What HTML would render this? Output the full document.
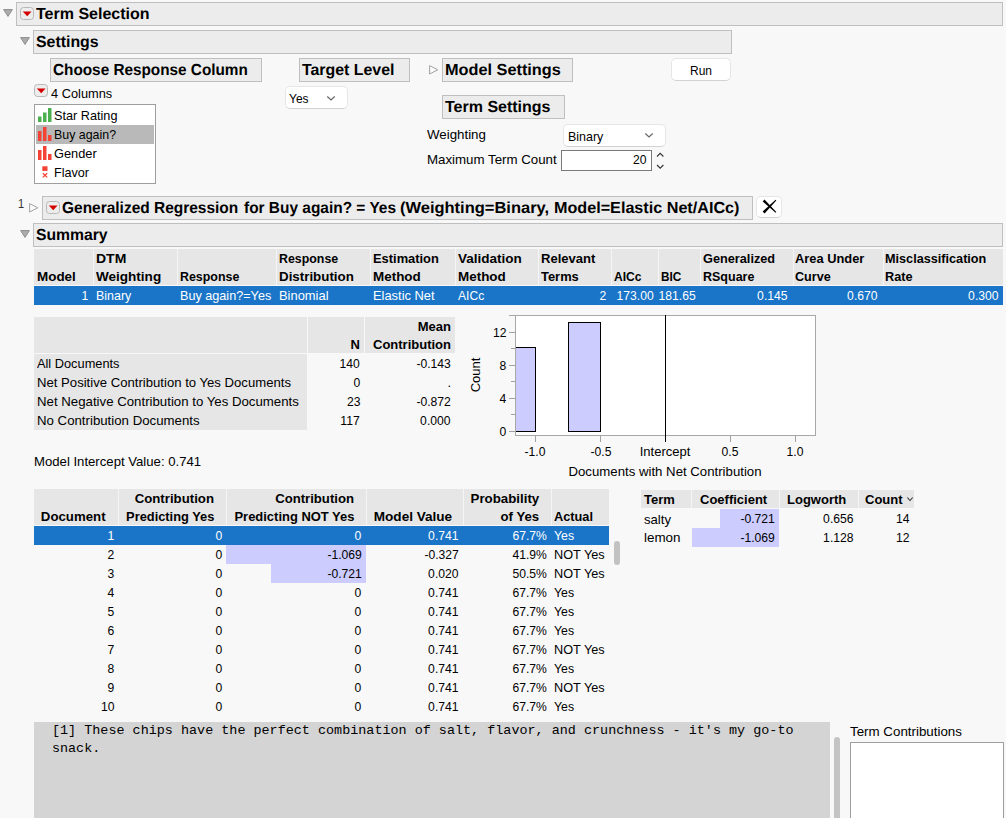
<!DOCTYPE html>
<html lang="en">
<head>
<meta charset="utf-8">
<title>Term Selection</title>
<style>
html,body{margin:0;padding:0}
body{width:1006px;height:818px;overflow:hidden;background:#f8f8f8;position:relative;
 font-family:"Liberation Sans",sans-serif;font-size:13px;color:#000;}
.b{position:absolute;box-sizing:border-box}
.t{position:absolute;white-space:nowrap;line-height:20px;height:20px}
.h{font-weight:bold;font-size:16px}
.th{font-weight:bold;font-size:13px}
.w{color:#fff}
.hd{background:#ececec;border:1px solid #bfbfbf}
.mono{font-family:"Liberation Mono",monospace;font-size:13.4px}
svg{position:absolute;overflow:visible}
</style>
</head>
<body>
<svg style="left:3px;top:9px" width="10" height="8" viewBox="0 0 10 8"><path d="M0.6 0.6 L9.4 0.6 L5 7.4 Z" fill="#acacac" stroke="#8e8e8e" stroke-width="1" stroke-linejoin="round"/></svg>
<div class="b hd" style="left:16px;top:2px;width:987px;height:24px;"></div>
<svg style="left:20px;top:7px" width="14" height="13" viewBox="0 0 14 13"><rect x="0.5" y="0.5" width="13" height="12" rx="3" ry="3" fill="#ededed" stroke="#b8b8b8"/><path d="M2.8 4.6 L11.6 4.6 L7.2 9.2 Z" fill="#d40000"/></svg>
<div class="t h" style="top:4px;left:36px;transform:rotate(0.03deg);transform-origin:0 50%;">Term Selection</div>
<svg style="left:20px;top:37px" width="10" height="8" viewBox="0 0 10 8"><path d="M0.6 0.6 L9.4 0.6 L5 7.4 Z" fill="#acacac" stroke="#8e8e8e" stroke-width="1" stroke-linejoin="round"/></svg>
<div class="b hd" style="left:33px;top:30px;width:699px;height:24px;"></div>
<div class="t h" style="top:32px;left:36px;transform:scaleX(0.992) rotate(0.03deg);transform-origin:0 50%;">Settings</div>
<div class="b hd" style="left:50px;top:58px;width:212px;height:24px;"></div>
<div class="t h" style="top:60px;left:53px;transform:scaleX(0.957) rotate(0.03deg);transform-origin:0 50%;">Choose Response Column</div>
<div class="b hd" style="left:299px;top:58px;width:111px;height:24px;"></div>
<div class="t h" style="top:60px;left:302px;transform:scaleX(0.993) rotate(0.03deg);transform-origin:0 50%;">Target Level</div>
<svg style="left:429px;top:64.5px" width="10" height="10" viewBox="0 0 10 10"><path d="M0.6 0.6 L8.8 4.8 L0.6 9 Z" fill="#fbfbfb" stroke="#a2a2a2" stroke-width="1" stroke-linejoin="round"/></svg>
<div class="b hd" style="left:442px;top:58px;width:131px;height:24px;"></div>
<div class="t h" style="top:60px;left:445px;transform:scaleX(1.018) rotate(0.03deg);transform-origin:0 50%;">Model Settings</div>
<div class="b " style="left:671px;top:58px;width:60px;height:23px;background:#fff;border:1px solid #e6e6e6;border-bottom-color:#d2d2d2;border-radius:5px"></div>
<div class="t" style="top:61px;left:701px;transform:translateX(-50%) scaleX(0.923);">Run</div>
<div class="b hd" style="left:442px;top:95px;width:123px;height:24px;"></div>
<div class="t h" style="top:97px;left:445px;transform:rotate(0.03deg);transform-origin:0 50%;">Term Settings</div>
<svg style="left:34px;top:84px" width="14" height="13" viewBox="0 0 14 13"><rect x="0.5" y="0.5" width="13" height="12" rx="3" ry="3" fill="#ededed" stroke="#b8b8b8"/><path d="M2.8 4.6 L11.6 4.6 L7.2 9.2 Z" fill="#d40000"/></svg>
<div class="t" style="top:84px;left:50.7px;transform:scaleX(0.985);transform-origin:0 50%;">4 Columns</div>
<div class="b " style="left:34px;top:104px;width:122px;height:80px;background:#fff;border:1px solid #9e9e9e"></div>
<div class="b " style="left:36px;top:125px;width:118px;height:19px;background:#b9b9b9"></div>
<svg style="left:38px;top:108px" width="14" height="14" viewBox="0 0 14 14"><rect x="0" y="8.5" width="3.5" height="5.5" fill="#4caf50"/><rect x="5" y="4.5" width="3.5" height="9.5" fill="#4caf50"/><rect x="10" y="0" width="3.5" height="14" fill="#4caf50"/></svg>
<svg style="left:38px;top:127px" width="14" height="14" viewBox="0 0 14 14"><rect x="0" y="4" width="3.5" height="10" fill="#f44336"/><rect x="5" y="0" width="3.5" height="14" fill="#f44336"/><rect x="10" y="8" width="3.5" height="6" fill="#f44336"/></svg>
<svg style="left:38px;top:146px" width="14" height="14" viewBox="0 0 14 14"><rect x="0" y="4" width="3.5" height="10" fill="#f44336"/><rect x="5" y="0" width="3.5" height="14" fill="#f44336"/><rect x="10" y="8" width="3.5" height="6" fill="#f44336"/></svg>
<svg style="left:42px;top:166px" width="6" height="12" viewBox="0 0 6 12"><rect x="0.3" y="0.3" width="5.2" height="4.6" fill="#f44336"/><path d="M0.8 7.2 L5.2 11.4 M5.2 7.2 L0.8 11.4" stroke="#f44336" stroke-width="1.3" fill="none"/></svg>
<div class="t" style="top:106px;left:54px;transform:scaleX(0.976);transform-origin:0 50%;">Star Rating</div>
<div class="t" style="top:125px;left:54px;transform:scaleX(0.954);transform-origin:0 50%;">Buy again?</div>
<div class="t" style="top:144px;left:54px;transform:scaleX(0.984);transform-origin:0 50%;">Gender</div>
<div class="t" style="top:163px;left:54px;transform:scaleX(0.971);transform-origin:0 50%;">Flavor</div>
<div class="b " style="left:285px;top:86px;width:63px;height:23px;background:#fff;border:1px solid #e6e6e6;border-bottom-color:#d2d2d2;border-radius:5px"></div>
<div class="t" style="top:89px;left:289px;transform:scaleX(0.920);transform-origin:0 50%;">Yes</div>
<svg style="left:327px;top:95.5px" width="8" height="5" viewBox="0 0 8 5"><path d="M0.3 0.5 L4.0 4 L7.7 0.5" stroke="#666" stroke-width="1.2" fill="none"/></svg>
<div class="t" style="top:125px;left:427px;transform:scaleX(1.023);transform-origin:0 50%;">Weighting</div>
<div class="b " style="left:563px;top:124px;width:103px;height:23px;background:#fff;border:1px solid #e6e6e6;border-bottom-color:#d2d2d2;border-radius:5px"></div>
<div class="t" style="top:127px;left:568px;transform:scaleX(0.957);transform-origin:0 50%;">Binary</div>
<svg style="left:645px;top:133px" width="8" height="5" viewBox="0 0 8 5"><path d="M0.3 0.5 L4.0 4 L7.7 0.5" stroke="#666" stroke-width="1.2" fill="none"/></svg>
<div class="t" style="top:150px;left:427px;transform:scaleX(1.022);transform-origin:0 50%;">Maximum Term Count</div>
<div class="b " style="left:561px;top:150px;width:91px;height:21px;background:#fff;border:1px solid #7a7a7a"></div>
<div class="t" style="top:150px;right:360px;transform:scaleX(0.935);transform-origin:100% 50%;">20</div>
<svg style="left:656px;top:152px" width="8" height="18" viewBox="0 0 8 18"><path d="M1 4.5 L4.2 1.3 L7.4 4.5 M1 13 L4.2 16.2 L7.4 13" stroke="#333" stroke-width="1.1" fill="none"/></svg>
<div class="t" style="top:194px;left:17.5px;transform:scaleX(0.850);transform-origin:0 50%;color:#333">1</div>
<svg style="left:29px;top:202.5px" width="10" height="10" viewBox="0 0 10 10"><path d="M0.6 0.6 L8.8 4.8 L0.6 9 Z" fill="#fbfbfb" stroke="#a2a2a2" stroke-width="1" stroke-linejoin="round"/></svg>
<div class="b hd" style="left:42px;top:196px;width:711px;height:24px;"></div>
<svg style="left:46px;top:201px" width="14" height="13" viewBox="0 0 14 13"><rect x="0.5" y="0.5" width="13" height="12" rx="3" ry="3" fill="#ededed" stroke="#b8b8b8"/><path d="M2.8 4.6 L11.6 4.6 L7.2 9.2 Z" fill="#d40000"/></svg>
<div class="t h" style="top:198px;left:62px;transform:scaleX(0.967) rotate(0.03deg);transform-origin:0 50%;">Generalized Regression</div>
<div class="t h" style="top:198px;left:243.5px;transform:scaleX(0.965) rotate(0.03deg);transform-origin:0 50%;">for Buy again? = Yes</div>
<div class="t h" style="top:198px;left:400px;transform:scaleX(1.030) rotate(0.03deg);transform-origin:0 50%;">(Weighting=Binary,</div>
<div class="t h" style="top:198px;left:553.5px;transform:scaleX(1.010) rotate(0.03deg);transform-origin:0 50%;">Model=Elastic Net/AICc)</div>
<div class="b " style="left:756px;top:196px;width:26px;height:22px;background:#fff;border:1px solid #e6e6e6;border-bottom-color:#d2d2d2;border-radius:5px"></div>
<svg style="left:762px;top:199px" width="15" height="15" viewBox="0 0 15 15"><path d="M2.5 0.6 L14.3 13.1 L13.6 13.8 L0.7 2.4 Z M13.6 0.7 L14.3 1.4 L2.6 14.4 L0.6 12.6 Z" fill="#000"/></svg>
<svg style="left:20px;top:230px" width="10" height="8" viewBox="0 0 10 8"><path d="M0.6 0.6 L9.4 0.6 L5 7.4 Z" fill="#acacac" stroke="#8e8e8e" stroke-width="1" stroke-linejoin="round"/></svg>
<div class="b hd" style="left:33px;top:223px;width:970px;height:24px;"></div>
<div class="t h" style="top:225px;left:36px;transform:scaleX(0.982) rotate(0.03deg);transform-origin:0 50%;">Summary</div>
<div class="b " style="left:34px;top:249px;width:969px;height:36px;background:#e6e6e6"></div>
<div class="b " style="left:93px;top:249px;width:1.2px;height:36px;background:#f5f5f5"></div>
<div class="b " style="left:177px;top:249px;width:1.2px;height:36px;background:#f5f5f5"></div>
<div class="b " style="left:275.5px;top:249px;width:1.2px;height:36px;background:#f5f5f5"></div>
<div class="b " style="left:370px;top:249px;width:1.2px;height:36px;background:#f5f5f5"></div>
<div class="b " style="left:455px;top:249px;width:1.2px;height:36px;background:#f5f5f5"></div>
<div class="b " style="left:538px;top:249px;width:1.2px;height:36px;background:#f5f5f5"></div>
<div class="b " style="left:611px;top:249px;width:1.2px;height:36px;background:#f5f5f5"></div>
<div class="b " style="left:658px;top:249px;width:1.2px;height:36px;background:#f5f5f5"></div>
<div class="b " style="left:700px;top:249px;width:1.2px;height:36px;background:#f5f5f5"></div>
<div class="b " style="left:792.5px;top:249px;width:1.2px;height:36px;background:#f5f5f5"></div>
<div class="b " style="left:882.5px;top:249px;width:1.2px;height:36px;background:#f5f5f5"></div>
<div class="t th" style="top:267px;left:37px;transform:scaleX(1.034);transform-origin:0 50%;">Model</div>
<div class="t th" style="top:249px;left:96px;transform:scaleX(1.078);transform-origin:0 50%;">DTM</div>
<div class="t th" style="top:267px;left:96px;transform:scaleX(1.041);transform-origin:0 50%;">Weighting</div>
<div class="t th" style="top:267px;left:180px;transform:scaleX(0.955);transform-origin:0 50%;">Response</div>
<div class="t th" style="top:249px;left:279px;transform:scaleX(0.952);transform-origin:0 50%;">Response</div>
<div class="t th" style="top:267px;left:279px;transform:scaleX(1.026);transform-origin:0 50%;">Distribution</div>
<div class="t th" style="top:249px;left:373px;transform:scaleX(0.991);transform-origin:0 50%;">Estimation</div>
<div class="t th" style="top:267px;left:373px;transform:scaleX(1.033);transform-origin:0 50%;">Method</div>
<div class="t th" style="top:249px;left:458px;transform:scaleX(1.040);transform-origin:0 50%;">Validation</div>
<div class="t th" style="top:267px;left:458px;transform:scaleX(1.033);transform-origin:0 50%;">Method</div>
<div class="t th" style="top:249px;left:541px;transform:scaleX(1.004);transform-origin:0 50%;">Relevant</div>
<div class="t th" style="top:267px;left:541px;transform:scaleX(0.993);transform-origin:0 50%;">Terms</div>
<div class="t th" style="top:267px;left:614px;transform:scaleX(0.929);transform-origin:0 50%;">AICc</div>
<div class="t th" style="top:267px;left:661px;transform:scaleX(0.907);transform-origin:0 50%;">BIC</div>
<div class="t th" style="top:249px;left:703px;transform:scaleX(0.979);transform-origin:0 50%;">Generalized</div>
<div class="t th" style="top:267px;left:703px;transform:scaleX(0.962);transform-origin:0 50%;">RSquare</div>
<div class="t th" style="top:249px;left:794.5px;transform:scaleX(0.989);transform-origin:0 50%;">Area Under</div>
<div class="t th" style="top:267px;left:794.5px;transform:scaleX(0.970);transform-origin:0 50%;">Curve</div>
<div class="t th" style="top:249px;left:885px;transform:scaleX(0.974);transform-origin:0 50%;">Misclassification</div>
<div class="t th" style="top:267px;left:885px;transform:scaleX(0.978);transform-origin:0 50%;">Rate</div>
<div class="b " style="left:34px;top:286px;width:969px;height:19px;background:#1a75c8"></div>
<div class="t w" style="top:286px;right:918px;transform:scaleX(0.935);transform-origin:100% 50%;">1</div>
<div class="t w" style="top:286px;left:96px;transform:scaleX(0.957);transform-origin:0 50%;">Binary</div>
<div class="t w" style="top:286px;left:180px;transform:scaleX(0.972);transform-origin:0 50%;">Buy again?=Yes</div>
<div class="t w" style="top:286px;left:279px;transform:scaleX(0.993);transform-origin:0 50%;">Binomial</div>
<div class="t w" style="top:286px;left:373px;transform:scaleX(0.991);transform-origin:0 50%;">Elastic Net</div>
<div class="t w" style="top:286px;left:458px;transform:scaleX(0.931);transform-origin:0 50%;">AICc</div>
<div class="t w" style="top:286px;right:399.5px;transform:scaleX(0.935);transform-origin:100% 50%;">2</div>
<div class="t w" style="top:286px;right:352.5px;transform:scaleX(0.935);transform-origin:100% 50%;">173.00</div>
<div class="t w" style="top:286px;right:310.5px;transform:scaleX(0.935);transform-origin:100% 50%;">181.65</div>
<div class="t w" style="top:286px;right:218px;transform:scaleX(0.935);transform-origin:100% 50%;">0.145</div>
<div class="t w" style="top:286px;right:128px;transform:scaleX(0.935);transform-origin:100% 50%;">0.670</div>
<div class="t w" style="top:286px;right:7px;transform:scaleX(0.935);transform-origin:100% 50%;">0.300</div>
<div class="b " style="left:34px;top:317px;width:273px;height:36px;background:#e6e6e6"></div>
<div class="b " style="left:308px;top:317px;width:56px;height:36px;background:#e6e6e6"></div>
<div class="b " style="left:365px;top:317px;width:90px;height:36px;background:#e6e6e6"></div>
<div class="b " style="left:34px;top:354px;width:273px;height:76px;background:#e6e6e6"></div>
<div class="t th" style="top:335px;right:646px;">N</div>
<div class="t th" style="top:317px;right:555px;">Mean</div>
<div class="t th" style="top:335px;right:555px;">Contribution</div>
<div class="t" style="top:354px;left:37px;transform:scaleX(0.984);transform-origin:0 50%;">All Documents</div>
<div class="t" style="top:354px;right:646px;transform:scaleX(0.935);transform-origin:100% 50%;">140</div>
<div class="t" style="top:354px;right:555px;transform:scaleX(0.935);transform-origin:100% 50%;">-0.143</div>
<div class="t" style="top:373px;left:37px;transform:scaleX(1.010);transform-origin:0 50%;">Net Positive Contribution to Yes Documents</div>
<div class="t" style="top:373px;right:646px;transform:scaleX(0.935);transform-origin:100% 50%;">0</div>
<div class="t" style="top:373px;right:555px;">.</div>
<div class="t" style="top:392px;left:37px;transform:scaleX(1.018);transform-origin:0 50%;">Net Negative Contribution to Yes Documents</div>
<div class="t" style="top:392px;right:646px;transform:scaleX(0.935);transform-origin:100% 50%;">23</div>
<div class="t" style="top:392px;right:555px;transform:scaleX(0.935);transform-origin:100% 50%;">-0.872</div>
<div class="t" style="top:411px;left:37px;transform:scaleX(1.018);transform-origin:0 50%;">No Contribution Documents</div>
<div class="t" style="top:411px;right:646px;transform:scaleX(0.935);transform-origin:100% 50%;">117</div>
<div class="t" style="top:411px;right:555px;transform:scaleX(0.935);transform-origin:100% 50%;">0.000</div>
<div class="t" style="top:452px;left:34px;transform:scaleX(1.011);transform-origin:0 50%;">Model Intercept Value: 0.741</div>
<div class="b " style="left:515px;top:315px;width:301px;height:121px;background:#fff;border:1px solid #a8a8a8"></div>
<div class="b " style="left:509px;top:315px;width:6px;height:1px;background:#a8a8a8"></div>
<div class="b " style="left:516px;top:347px;width:20px;height:85px;background:#ccccff;border:1px solid #000;border-left:none"></div>
<div class="b " style="left:568px;top:322px;width:33px;height:110px;background:#ccccff;border:1px solid #000"></div>
<div class="b " style="left:509px;top:332px;width:6px;height:1px;background:#a0a0a0"></div>
<div class="b " style="left:509px;top:365px;width:6px;height:1px;background:#a0a0a0"></div>
<div class="b " style="left:509px;top:398px;width:6px;height:1px;background:#a0a0a0"></div>
<div class="b " style="left:509px;top:431px;width:6px;height:1px;background:#a0a0a0"></div>
<div class="b " style="left:511px;top:348px;width:4px;height:1px;background:#a0a0a0"></div>
<div class="b " style="left:511px;top:381px;width:4px;height:1px;background:#a0a0a0"></div>
<div class="b " style="left:511px;top:414px;width:4px;height:1px;background:#a0a0a0"></div>
<div class="t" style="top:323px;right:500px;transform:scaleX(0.935);transform-origin:100% 50%;">12</div>
<div class="t" style="top:356px;right:500px;transform:scaleX(0.935);transform-origin:100% 50%;">8</div>
<div class="t" style="top:389px;right:500px;transform:scaleX(0.935);transform-origin:100% 50%;">4</div>
<div class="t" style="top:422px;right:500px;transform:scaleX(0.935);transform-origin:100% 50%;">0</div>
<div class="b " style="left:535px;top:436px;width:1px;height:6px;background:#a0a0a0"></div>
<div class="b " style="left:600px;top:436px;width:1px;height:6px;background:#a0a0a0"></div>
<div class="b " style="left:730px;top:436px;width:1px;height:6px;background:#a0a0a0"></div>
<div class="b " style="left:795px;top:436px;width:1px;height:6px;background:#a0a0a0"></div>
<div class="b " style="left:665px;top:315px;width:1px;height:127px;background:#000"></div>
<div class="t" style="top:442px;left:535px;transform:translateX(-50%) scaleX(0.935);">-1.0</div>
<div class="t" style="top:442px;left:601px;transform:translateX(-50%) scaleX(0.935);">-0.5</div>
<div class="t" style="top:442px;left:665px;transform:translateX(-50%);">Intercept</div>
<div class="t" style="top:442px;left:730px;transform:translateX(-50%) scaleX(0.935);">0.5</div>
<div class="t" style="top:442px;left:795px;transform:translateX(-50%) scaleX(0.935);">1.0</div>
<div class="t" style="top:462px;left:665px;transform:translateX(-50%) scaleX(1.016);">Documents with Net Contribution</div>
<div class="t" style="left:476px;top:365px;transform:translateX(-50%) rotate(-90deg)">Count</div>
<div class="b " style="left:34px;top:489px;width:575px;height:36px;background:#e6e6e6"></div>
<div class="b " style="left:118px;top:489px;width:1.2px;height:36px;background:#f5f5f5"></div>
<div class="b " style="left:226px;top:489px;width:1.2px;height:36px;background:#f5f5f5"></div>
<div class="b " style="left:366px;top:489px;width:1.2px;height:36px;background:#f5f5f5"></div>
<div class="b " style="left:463px;top:489px;width:1.2px;height:36px;background:#f5f5f5"></div>
<div class="b " style="left:551px;top:489px;width:1.2px;height:36px;background:#f5f5f5"></div>
<div class="t th" style="top:507px;right:900px;transform:scaleX(1.018);transform-origin:100% 50%;">Document</div>
<div class="t th" style="top:489px;right:792px;transform:scaleX(1.017);transform-origin:100% 50%;">Contribution</div>
<div class="t th" style="top:507px;right:792px;transform:scaleX(0.988);transform-origin:100% 50%;">Predicting Yes</div>
<div class="t th" style="top:489px;right:652px;transform:scaleX(1.011);transform-origin:100% 50%;">Contribution</div>
<div class="t th" style="top:507px;right:651.5px;transform:scaleX(0.996);transform-origin:100% 50%;">Predicting NOT Yes</div>
<div class="t th" style="top:507px;right:554px;transform:scaleX(1.043);transform-origin:100% 50%;">Model Value</div>
<div class="t th" style="top:489px;right:467px;transform:scaleX(1.021);transform-origin:100% 50%;">Probability</div>
<div class="t th" style="top:507px;right:467px;transform:scaleX(1.012);transform-origin:100% 50%;">of Yes</div>
<div class="t th" style="top:507px;left:554px;transform:scaleX(0.981);transform-origin:0 50%;">Actual</div>
<div class="b " style="left:34px;top:526px;width:575px;height:19px;background:#1a75c8"></div>
<div class="b " style="left:226px;top:545px;width:140px;height:19px;background:#ccccff"></div>
<div class="b " style="left:271px;top:564px;width:95px;height:19px;background:#ccccff"></div>
<div class="t w" style="top:526px;right:892px;transform:scaleX(0.935);transform-origin:100% 50%;">1</div>
<div class="t w" style="top:526px;right:784px;transform:scaleX(0.935);transform-origin:100% 50%;">0</div>
<div class="t w" style="top:526px;right:644.5px;transform:scaleX(0.935);transform-origin:100% 50%;">0</div>
<div class="t w" style="top:526px;right:547px;transform:scaleX(0.935);transform-origin:100% 50%;">0.741</div>
<div class="t w" style="top:526px;right:459.5px;transform:scaleX(0.935);transform-origin:100% 50%;">67.7%</div>
<div class="t w" style="top:526px;left:554px;transform:scaleX(0.945);transform-origin:0 50%;">Yes</div>
<div class="t" style="top:545px;right:892px;transform:scaleX(0.935);transform-origin:100% 50%;">2</div>
<div class="t" style="top:545px;right:784px;transform:scaleX(0.935);transform-origin:100% 50%;">0</div>
<div class="t" style="top:545px;right:644.5px;transform:scaleX(0.935);transform-origin:100% 50%;">-1.069</div>
<div class="t" style="top:545px;right:547px;transform:scaleX(0.935);transform-origin:100% 50%;">-0.327</div>
<div class="t" style="top:545px;right:459.5px;transform:scaleX(0.935);transform-origin:100% 50%;">41.9%</div>
<div class="t" style="top:545px;left:554px;transform:scaleX(0.978);transform-origin:0 50%;">NOT Yes</div>
<div class="t" style="top:564px;right:892px;transform:scaleX(0.935);transform-origin:100% 50%;">3</div>
<div class="t" style="top:564px;right:784px;transform:scaleX(0.935);transform-origin:100% 50%;">0</div>
<div class="t" style="top:564px;right:644.5px;transform:scaleX(0.935);transform-origin:100% 50%;">-0.721</div>
<div class="t" style="top:564px;right:547px;transform:scaleX(0.935);transform-origin:100% 50%;">0.020</div>
<div class="t" style="top:564px;right:459.5px;transform:scaleX(0.935);transform-origin:100% 50%;">50.5%</div>
<div class="t" style="top:564px;left:554px;transform:scaleX(0.978);transform-origin:0 50%;">NOT Yes</div>
<div class="t" style="top:583px;right:892px;transform:scaleX(0.935);transform-origin:100% 50%;">4</div>
<div class="t" style="top:583px;right:784px;transform:scaleX(0.935);transform-origin:100% 50%;">0</div>
<div class="t" style="top:583px;right:644.5px;transform:scaleX(0.935);transform-origin:100% 50%;">0</div>
<div class="t" style="top:583px;right:547px;transform:scaleX(0.935);transform-origin:100% 50%;">0.741</div>
<div class="t" style="top:583px;right:459.5px;transform:scaleX(0.935);transform-origin:100% 50%;">67.7%</div>
<div class="t" style="top:583px;left:554px;transform:scaleX(0.945);transform-origin:0 50%;">Yes</div>
<div class="t" style="top:602px;right:892px;transform:scaleX(0.935);transform-origin:100% 50%;">5</div>
<div class="t" style="top:602px;right:784px;transform:scaleX(0.935);transform-origin:100% 50%;">0</div>
<div class="t" style="top:602px;right:644.5px;transform:scaleX(0.935);transform-origin:100% 50%;">0</div>
<div class="t" style="top:602px;right:547px;transform:scaleX(0.935);transform-origin:100% 50%;">0.741</div>
<div class="t" style="top:602px;right:459.5px;transform:scaleX(0.935);transform-origin:100% 50%;">67.7%</div>
<div class="t" style="top:602px;left:554px;transform:scaleX(0.945);transform-origin:0 50%;">Yes</div>
<div class="t" style="top:621px;right:892px;transform:scaleX(0.935);transform-origin:100% 50%;">6</div>
<div class="t" style="top:621px;right:784px;transform:scaleX(0.935);transform-origin:100% 50%;">0</div>
<div class="t" style="top:621px;right:644.5px;transform:scaleX(0.935);transform-origin:100% 50%;">0</div>
<div class="t" style="top:621px;right:547px;transform:scaleX(0.935);transform-origin:100% 50%;">0.741</div>
<div class="t" style="top:621px;right:459.5px;transform:scaleX(0.935);transform-origin:100% 50%;">67.7%</div>
<div class="t" style="top:621px;left:554px;transform:scaleX(0.945);transform-origin:0 50%;">Yes</div>
<div class="t" style="top:640px;right:892px;transform:scaleX(0.935);transform-origin:100% 50%;">7</div>
<div class="t" style="top:640px;right:784px;transform:scaleX(0.935);transform-origin:100% 50%;">0</div>
<div class="t" style="top:640px;right:644.5px;transform:scaleX(0.935);transform-origin:100% 50%;">0</div>
<div class="t" style="top:640px;right:547px;transform:scaleX(0.935);transform-origin:100% 50%;">0.741</div>
<div class="t" style="top:640px;right:459.5px;transform:scaleX(0.935);transform-origin:100% 50%;">67.7%</div>
<div class="t" style="top:640px;left:554px;transform:scaleX(0.978);transform-origin:0 50%;">NOT Yes</div>
<div class="t" style="top:659px;right:892px;transform:scaleX(0.935);transform-origin:100% 50%;">8</div>
<div class="t" style="top:659px;right:784px;transform:scaleX(0.935);transform-origin:100% 50%;">0</div>
<div class="t" style="top:659px;right:644.5px;transform:scaleX(0.935);transform-origin:100% 50%;">0</div>
<div class="t" style="top:659px;right:547px;transform:scaleX(0.935);transform-origin:100% 50%;">0.741</div>
<div class="t" style="top:659px;right:459.5px;transform:scaleX(0.935);transform-origin:100% 50%;">67.7%</div>
<div class="t" style="top:659px;left:554px;transform:scaleX(0.945);transform-origin:0 50%;">Yes</div>
<div class="t" style="top:678px;right:892px;transform:scaleX(0.935);transform-origin:100% 50%;">9</div>
<div class="t" style="top:678px;right:784px;transform:scaleX(0.935);transform-origin:100% 50%;">0</div>
<div class="t" style="top:678px;right:644.5px;transform:scaleX(0.935);transform-origin:100% 50%;">0</div>
<div class="t" style="top:678px;right:547px;transform:scaleX(0.935);transform-origin:100% 50%;">0.741</div>
<div class="t" style="top:678px;right:459.5px;transform:scaleX(0.935);transform-origin:100% 50%;">67.7%</div>
<div class="t" style="top:678px;left:554px;transform:scaleX(0.978);transform-origin:0 50%;">NOT Yes</div>
<div class="t" style="top:697px;right:892px;transform:scaleX(0.935);transform-origin:100% 50%;">10</div>
<div class="t" style="top:697px;right:784px;transform:scaleX(0.935);transform-origin:100% 50%;">0</div>
<div class="t" style="top:697px;right:644.5px;transform:scaleX(0.935);transform-origin:100% 50%;">0</div>
<div class="t" style="top:697px;right:547px;transform:scaleX(0.935);transform-origin:100% 50%;">0.741</div>
<div class="t" style="top:697px;right:459.5px;transform:scaleX(0.935);transform-origin:100% 50%;">67.7%</div>
<div class="t" style="top:697px;left:554px;transform:scaleX(0.945);transform-origin:0 50%;">Yes</div>
<div class="b " style="left:614px;top:541px;width:6.4px;height:24px;background:#c2c2c2;border-radius:3px"></div>
<div class="b " style="left:641px;top:490px;width:273px;height:18px;background:#e6e6e6"></div>
<div class="b " style="left:691.2px;top:490px;width:1.2px;height:18px;background:#f5f5f5"></div>
<div class="b " style="left:778.5px;top:490px;width:1.2px;height:18px;background:#f5f5f5"></div>
<div class="b " style="left:857.6px;top:490px;width:1.2px;height:18px;background:#f5f5f5"></div>
<div class="t th" style="top:490px;left:644px;">Term</div>
<div class="t th" style="top:490px;left:700px;">Coefficient</div>
<div class="t th" style="top:490px;left:787px;">Logworth</div>
<div class="t th" style="top:490px;left:865px;">Count</div>
<svg style="left:907px;top:496.5px" width="6" height="4.5" viewBox="0 0 6 4.5"><path d="M0.3 0.5 L3.0 3.5 L5.7 0.5" stroke="#333" stroke-width="1.1" fill="none"/></svg>
<div class="b " style="left:720px;top:509px;width:59px;height:19px;background:#ccccff"></div>
<div class="b " style="left:692px;top:528px;width:87px;height:19px;background:#ccccff"></div>
<div class="t" style="top:510px;left:644px;transform:scaleX(1.010);transform-origin:0 50%;">salty</div>
<div class="t" style="top:509px;right:231.3px;transform:scaleX(0.935);transform-origin:100% 50%;">-0.721</div>
<div class="t" style="top:509px;right:152px;transform:scaleX(0.935);transform-origin:100% 50%;">0.656</div>
<div class="t" style="top:509px;right:96.5px;transform:scaleX(0.935);transform-origin:100% 50%;">14</div>
<div class="t" style="top:528px;left:644px;transform:scaleX(1.031);transform-origin:0 50%;">lemon</div>
<div class="t" style="top:528px;right:231.3px;transform:scaleX(0.935);transform-origin:100% 50%;">-1.069</div>
<div class="t" style="top:528px;right:152px;transform:scaleX(0.935);transform-origin:100% 50%;">1.128</div>
<div class="t" style="top:528px;right:96.5px;transform:scaleX(0.935);transform-origin:100% 50%;">12</div>
<div class="b " style="left:34px;top:722px;width:796px;height:96px;background:#d4d4d4"></div>
<div class="t mono" style="top:721px;left:52px;transform:scaleX(1.003);transform-origin:0 50%;">[1] These chips have the perfect combination of salt, flavor, and crunchness - it's my go-to</div>
<div class="t mono" style="top:739px;left:52px;">snack.</div>
<div class="b " style="left:834px;top:737px;width:6px;height:90px;background:#c4c4c4;border-radius:3px"></div>
<div class="t" style="top:722px;left:850px;transform:scaleX(1.026);transform-origin:0 50%;">Term Contributions</div>
<div class="b " style="left:850px;top:742px;width:154px;height:80px;background:#fff;border:1px solid #9e9e9e"></div>
</body>
</html>
